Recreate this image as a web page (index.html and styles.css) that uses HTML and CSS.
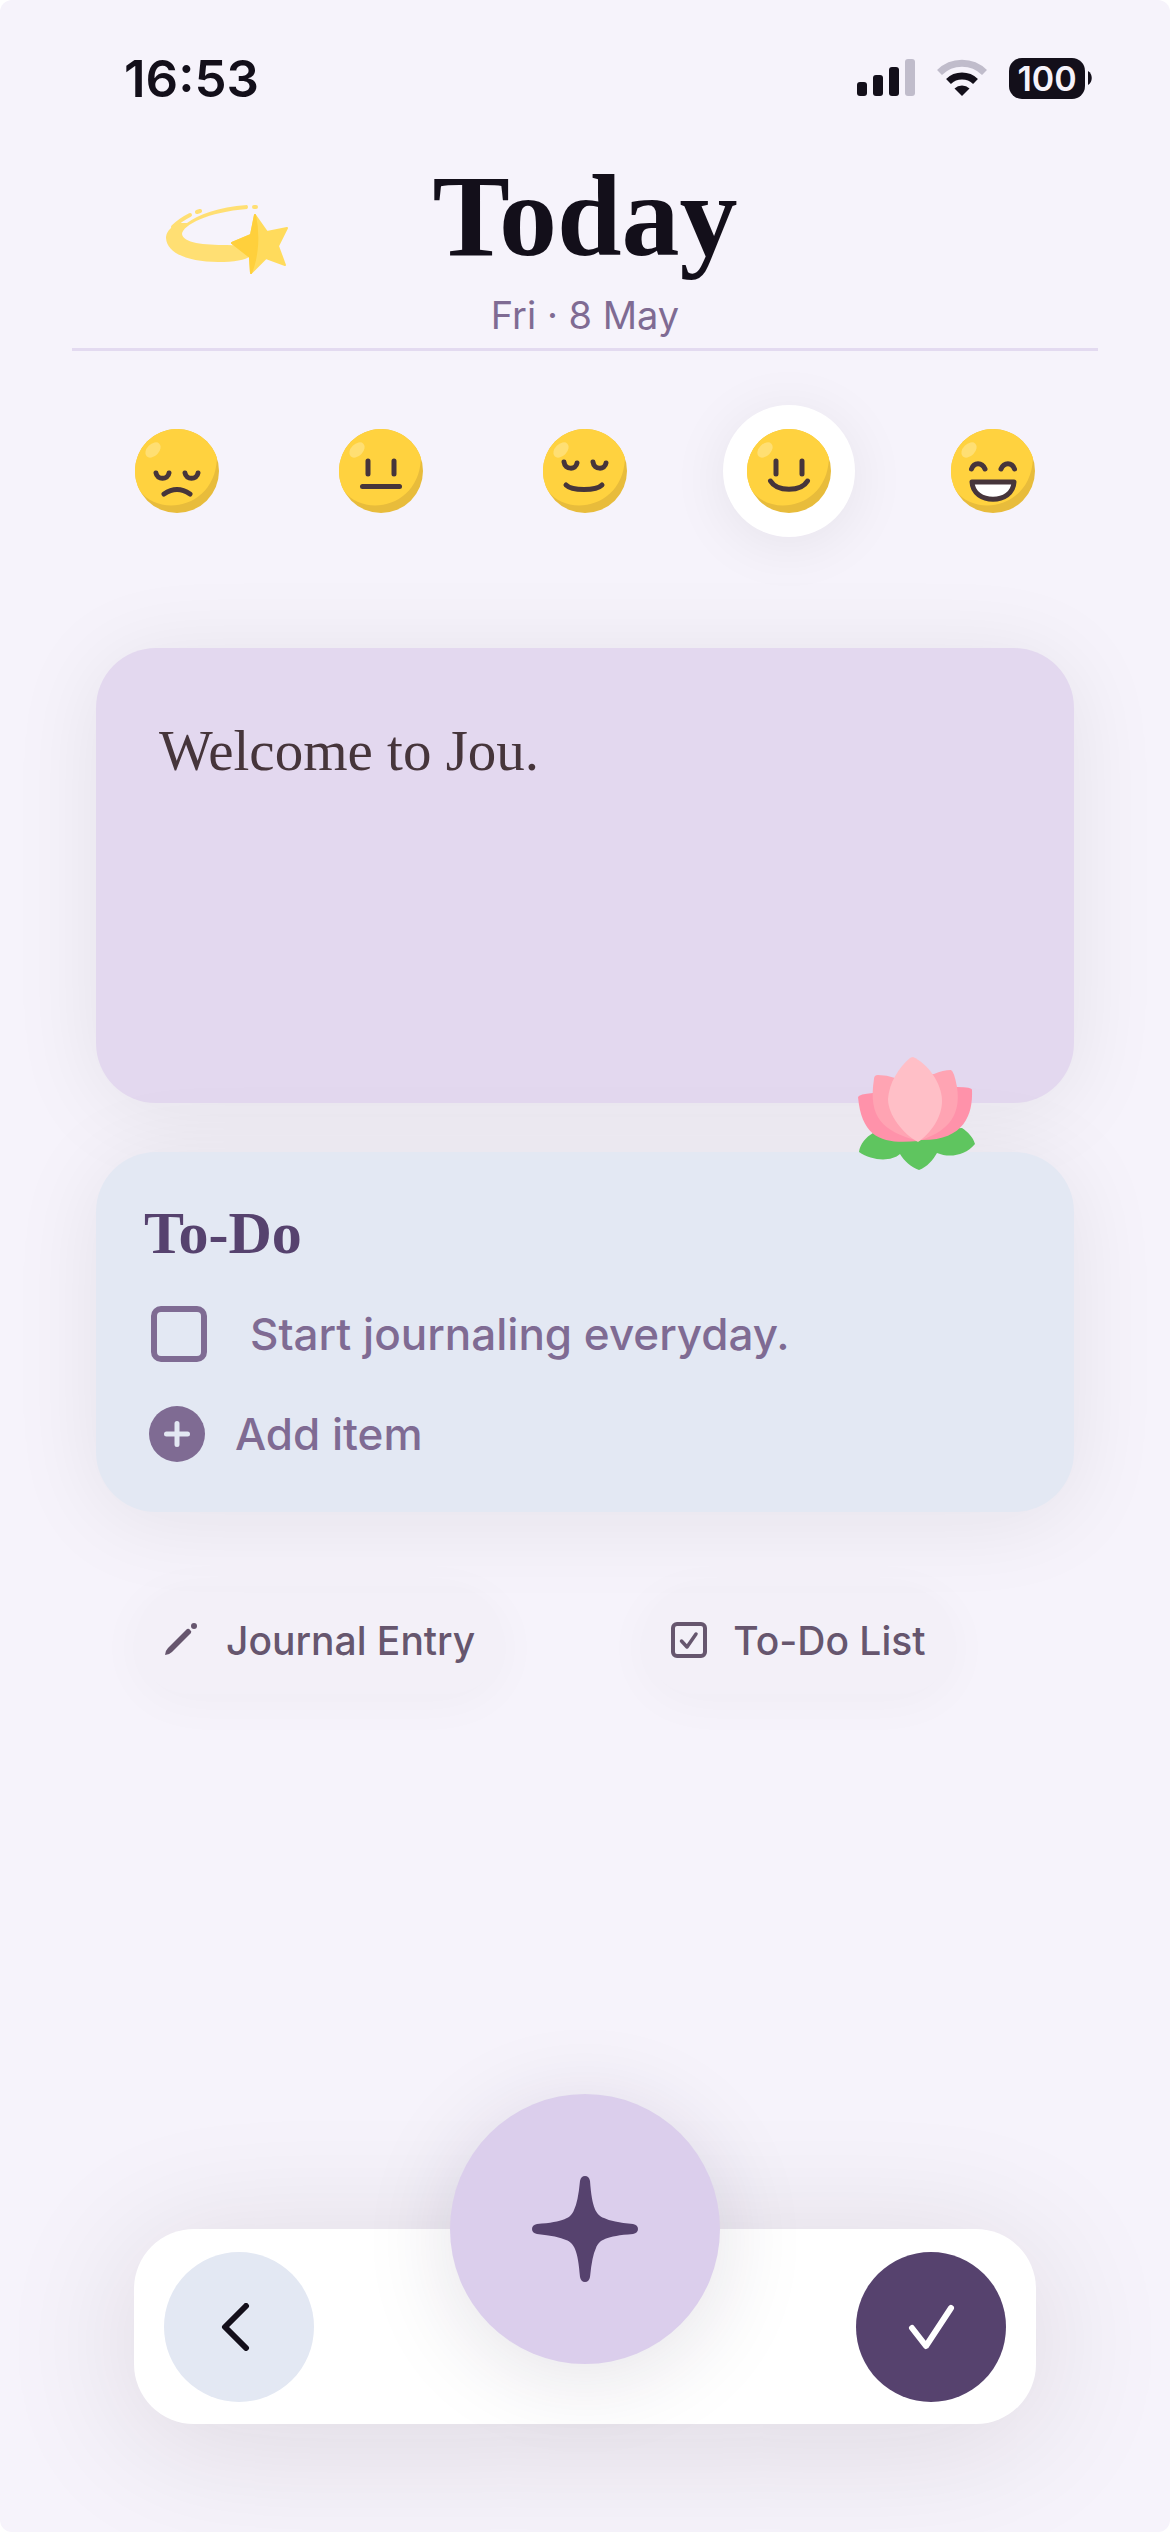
FILE: index.html
```html
<!DOCTYPE html>
<html lang="en">
<head>
    <meta charset="UTF-8">
    <meta name="viewport" content="width=device-width, initial-scale=1.0">
    <title>Jou - Today</title>
    <link rel="stylesheet" href="styles.css">
</head>
<body>
<div class="screen">

    <div class="status-bar">
        <span class="time">16:53</span>
        <div class="status-icons">
            <svg width="58" height="38" viewBox="0 0 58 38">
                <g fill="#130f1a">
                    <rect x="0" y="23" width="10" height="14" rx="3"/>
                    <rect x="16" y="16" width="10" height="21" rx="3"/>
                    <rect x="32" y="8" width="10" height="29" rx="3"/>
                </g>
                <rect x="48" y="0" width="10" height="37" rx="3" fill="#c0bccb"/>
            </svg>
            <svg width="50" height="38" viewBox="0 0 50 38">
                <path d="M2.500 13.500 A32 32 0 0 1 47.500 13.500" fill="none" stroke="#c0bccb" stroke-width="7"/>
                <path d="M11.500 22.500 A19.500 19.500 0 0 1 38.500 22.500" fill="none" stroke="#130f1a" stroke-width="7"/>
                <path d="M25 37 L17.500 29.500 A11 11 0 0 1 32.500 29.500 Z" fill="#130f1a"/>
            </svg>
            <div class="battery">
                <span class="battery-level">100</span>
                <svg width="4" height="14" viewBox="0 0 4 14"><path d="M0 0 C5 3 5 11 0 14 Z" fill="#130f1a"/></svg>
            </div>
        </div>
    </div>

    <header class="header">
        <svg class="shooting-star" width="124" height="72" viewBox="0 0 124 72">
            <path d="M81 1 C52 3 32 11 21 19 L12 19 C3 24 0 29 0 34 C1 50 24 58 52 58 C68 58 80 56 84 52 L84 42 L61 41 C38 41 17 39 16 30 C17 21 42 8 81 5 Q83 3 81 1 Z" fill="#ffdf73"/>
            <path d="M24 11 Q14 16 7 23" fill="none" stroke="#ffdf73" stroke-width="4" stroke-linecap="round"/>
            <path d="M31 8 L34 7 M88 3 L90 3" stroke="#ffdf73" stroke-width="4" stroke-linecap="round"/>
            <path d="M89 11 L101 28 L121 24 L112 42 L119 61 L100 54 L85 69 L84 53 L66 39 L85 31 Z" fill="#ffdb5c" stroke="#ffdb5c" stroke-width="2" stroke-linejoin="round"/>
            <path d="M89 11 C93 30 92 52 85 69 L84 53 L66 39 L85 31 Z" fill="#ffd03c" stroke="#ffd03c" stroke-width="2" stroke-linejoin="round"/>
        </svg>
        <h1>Today</h1>
        <p class="date">Fri · 8 May</p>
    </header>

    <div class="moods">
        <button class="mood" aria-label="Sad">
            <svg width="84" height="84" viewBox="0 0 84 84">
                <circle cx="42" cy="42" r="42" fill="#e8bc3b"/>
                <path d="M42 0 A42 42 0 0 0 5 62 C24 88 80 80 82 29 A42 42 0 0 0 42 0 Z" fill="#ffd23f"/>
                <ellipse cx="18" cy="21" rx="9" ry="6" transform="rotate(-45 18 21)" fill="#ffdf73"/>
                <g fill="none" stroke="#46353b" stroke-width="5" stroke-linecap="round">
                    <path d="M21 44 C22 51 33 51 34 44"/>
                    <path d="M50 44 C51 51 62 51 63 44"/>
                    <path d="M29 65 Q42 56 55 65"/>
                </g>
            </svg>
        </button>
        <button class="mood" aria-label="Neutral">
            <svg width="84" height="84" viewBox="0 0 84 84">
                <circle cx="42" cy="42" r="42" fill="#e8bc3b"/>
                <path d="M42 0 A42 42 0 0 0 5 62 C24 88 80 80 82 29 A42 42 0 0 0 42 0 Z" fill="#ffd23f"/>
                <ellipse cx="18" cy="21" rx="9" ry="6" transform="rotate(-45 18 21)" fill="#ffdf73"/>
                <g fill="none" stroke="#46353b" stroke-width="5" stroke-linecap="round">
                    <path d="M29 32 V45 M55 32 V45"/>
                    <path d="M23.500 57.500 H60.500"/>
                </g>
            </svg>
        </button>
        <button class="mood" aria-label="Calm">
            <svg width="84" height="84" viewBox="0 0 84 84">
                <circle cx="42" cy="42" r="42" fill="#e8bc3b"/>
                <path d="M42 0 A42 42 0 0 0 5 62 C24 88 80 80 82 29 A42 42 0 0 0 42 0 Z" fill="#ffd23f"/>
                <ellipse cx="18" cy="21" rx="9" ry="6" transform="rotate(-45 18 21)" fill="#ffdf73"/>
                <g fill="none" stroke="#46353b" stroke-width="5" stroke-linecap="round">
                    <path d="M21 33 C22 41 33 41 34 34"/>
                    <path d="M50 33 C51 41 62 41 63 34"/>
                    <path d="M23 56 C29 62 53 62 59 56"/>
                </g>
            </svg>
        </button>
        <button class="mood selected" aria-label="Happy" aria-pressed="true">
            <svg width="84" height="84" viewBox="0 0 84 84">
                <circle cx="42" cy="42" r="42" fill="#e8bc3b"/>
                <path d="M42 0 A42 42 0 0 0 5 62 C24 88 80 80 82 29 A42 42 0 0 0 42 0 Z" fill="#ffd23f"/>
                <ellipse cx="18" cy="21" rx="9" ry="6" transform="rotate(-45 18 21)" fill="#ffdf73"/>
                <g fill="none" stroke="#46353b" stroke-width="5" stroke-linecap="round">
                    <path d="M29 32 V45 M55 32 V45"/>
                    <path d="M23.500 52 C30 63 54 63 60.500 52"/>
                </g>
            </svg>
        </button>
        <button class="mood" aria-label="Very happy">
            <svg width="84" height="84" viewBox="0 0 84 84">
                <circle cx="42" cy="42" r="42" fill="#e8bc3b"/>
                <path d="M42 0 A42 42 0 0 0 5 62 C24 88 80 80 82 29 A42 42 0 0 0 42 0 Z" fill="#ffd23f"/>
                <ellipse cx="18" cy="21" rx="9" ry="6" transform="rotate(-45 18 21)" fill="#ffdf73"/>
                <g fill="none" stroke="#46353b" stroke-width="5" stroke-linecap="round" stroke-linejoin="round">
                    <path d="M20.500 40 C23 33 31 33 34 40"/>
                    <path d="M50 40 C53 33 61 33 63.500 40"/>
                    <path d="M21 53 H63 C62 76 22 76 21 53 Z" fill="#fff"/>
                </g>
            </svg>
        </button>
    </div>

    <main class="cards">
        <section class="card journal">
            <p>Welcome to Jou.</p>
        </section>

        <section class="card todo">
            <svg class="lotus" width="118" height="114" viewBox="0 0 118 114">
                <path d="M15 76 C8 80 2 87 1 95 C14 104 33 105 42 97 C46 104 53 110 61 113 C69 110 75 103 79 96 C91 101 107 99 117 87 C115 80 110 75 104 71 Z" fill="#5fc55f"/>
                <path d="M0 40 Q1 37 15 36 L99 30 Q114 30 114 33 C115 58 106 84 62 83 L61 84 C28 87 4 84 0 40 Z" fill="#ff92aa"/>
                <path d="M16 22 Q16 18 20 18 Q29 18 37 21 L76 17 Q85 13 93 13 Q96 14 99 30 C104 62 86 76 60 84 C24 74 10 60 16 22 Z" fill="#ffa4b3"/>
                <path d="M55 0 C69 6 84 26 84 44 C84 60 73 76 60 85 C45 77 30 58 30 42 C31 26 41 10 52 1 Q54 0 55 0 Z" fill="#ffbfc7"/>
            </svg>
            <h2>To-Do</h2>
            <div class="todo-item">
                <input type="checkbox" id="todo1">
                <label for="todo1">Start journaling everyday.</label>
            </div>
            <button class="add-item">
                <svg width="56" height="56" viewBox="0 0 56 56">
                    <circle cx="28" cy="28" r="28" fill="#7f6b93"/>
                    <path d="M28 17.500 V38.500 M17.500 28 H38.500" stroke="#e3e8f3" stroke-width="5" stroke-linecap="round"/>
                </svg>
                Add item
            </button>
        </section>
    </main>

    <div class="actions">
        <button class="action">
            <svg width="36" height="36" viewBox="0 0 36 36">
                <path d="M1 33 Q1 29 4 26 L23 7 Q25 6 26 8 Q28 9 27 11 L8 30 Q5 33 1 33 Z" fill="#66566e"/>
                <circle cx="30" cy="4" r="3" fill="#66566e"/>
            </svg>
            Journal Entry
        </button>
        <button class="action">
            <svg width="36" height="36" viewBox="0 0 36 36">
                <rect x="2" y="2" width="32" height="32" rx="4" fill="none" stroke="#66566e" stroke-width="4"/>
                <path d="M10.500 19 L16 25 L25 12" fill="none" stroke="#66566e" stroke-width="3.500" stroke-linecap="round" stroke-linejoin="round"/>
            </svg>
            To-Do List
        </button>
    </div>

    <nav class="bottom-bar">
        <button class="round back" aria-label="Back">
            <svg width="48" height="48" viewBox="0 0 48 48">
                <path d="M31 3 L10 24 L31 45" fill="none" stroke="#130f1a" stroke-width="6" stroke-linecap="round" stroke-linejoin="round"/>
            </svg>
        </button>
        <button class="sparkle" aria-label="Inspire me">
            <svg width="106" height="106" viewBox="0 0 106 106">
                <path d="M48 5 Q49 0 53 0 Q57 0 58 5 C60 32 64 39 72 42 Q80 46 101 48 Q106 49 106 53 Q106 57 101 58 C74 60 67 64 64 72 Q60 80 58 101 Q57 106 53 106 Q49 106 48 101 C46 74 42 67 34 64 Q26 60 5 58 Q0 57 0 53 Q0 49 5 48 C32 46 39 42 42 34 Q46 26 48 5 Z" fill="#56426e"/>
            </svg>
        </button>
        <button class="round done" aria-label="Done">
            <svg width="48" height="48" viewBox="0 0 48 48">
                <path d="M5 25 L19 43 L44 5" fill="none" stroke="#ffffff" stroke-width="6" stroke-linecap="round" stroke-linejoin="round"/>
            </svg>
        </button>
    </nav>

</div>
</body>
</html>
```
FILE: styles.css
```css
* {
    box-sizing: border-box;
}

body {
    margin: 0;
    background: #ffffff;
    font-family: Inter, sans-serif;
}

h1, h2, p {
    margin: 0;
}

button {
    border: none;
    padding: 0;
    background: none;
    font-family: inherit;
    cursor: pointer;
}

svg {
    display: block;
    flex: none;
}

.screen {
    display: flex;
    flex-direction: column;
    min-height: 100vh;
    background: #f6f3fb;
    border-radius: 12px;
    overflow: hidden;
}

/* status bar */
.status-bar {
    display: flex;
    justify-content: space-between;
    align-items: center;
    height: 156px;
    padding: 0 78px 0 124px;
}

.time {
    font-size: 51px;
    font-weight: 600;
    color: #130f1a;
}

.status-icons {
    display: flex;
    align-items: center;
    gap: 22px;
}

.battery {
    display: flex;
    align-items: center;
    gap: 3px;
}

.battery-level {
    width: 76px;
    border-radius: 13px;
    background: #130f1a;
    color: #f6f3fb;
    font-size: 34px;
    font-weight: 600;
    line-height: 41px;
    text-align: center;
}

/* header */
.header {
    position: relative;
    height: 195px;
    margin: 0 72px;
    border-bottom: 3px solid #e3daf0;
    text-align: center;
}

.header h1 {
    font-family: "Liberation Serif", serif;
    font-size: 116px;
    line-height: 120px;
    color: #130f1a;
}

.date {
    padding-top: 10px;
    font-size: 38px;
    line-height: 58px;
    color: #7f6b93;
}

.shooting-star {
    position: absolute;
    left: 94px;
    top: 48px;
}

/* moods */
.moods {
    display: flex;
    justify-content: space-between;
    margin: 54px 111px 0;
}

.mood {
    display: flex;
    align-items: center;
    justify-content: center;
    width: 132px;
    height: 132px;
    border-radius: 50%;
}

.mood.selected {
    background: #ffffff;
    box-shadow: 0 8px 60px rgba(30, 20, 30, 0.07);
}

/* cards */
.cards {
    display: flex;
    flex-direction: column;
    gap: 49px;
    margin: 111px 96px 0;
}

.card {
    border-radius: 60px;
    box-shadow: 0 8px 90px rgba(30, 20, 20, 0.08);
}

.journal {
    min-height: 455px;
    padding: 70px 63px;
    background: #e3d8ef;
    font-family: "Liberation Serif", serif;
    font-size: 57px;
    line-height: 66px;
    color: #46353b;
}

.todo {
    position: relative;
    padding: 48px 48px 50px;
    background: #e3e8f3;
    color: #7f6b93;
}

.todo h2 {
    font-family: "Liberation Serif", serif;
    font-size: 60px;
    line-height: 66px;
    color: #56426e;
}

.lotus {
    position: absolute;
    right: 98px;
    top: -95px;
}

.todo-item {
    display: flex;
    align-items: center;
    gap: 43px;
    height: 56px;
    margin: 40px 0 44px 7px;
    font-size: 44px;
    font-weight: 500;
}

.todo-item input {
    appearance: none;
    width: 56px;
    height: 56px;
    margin: 0;
    border: 6px solid #7f6b93;
    border-radius: 10px;
}

.add-item {
    display: flex;
    align-items: center;
    gap: 30px;
    margin-left: 5px;
    color: #7f6b93;
    font-size: 44px;
    font-weight: 500;
}

/* actions */
.actions {
    display: flex;
    gap: 140px;
    margin: 74px 136px 0;
}

.action {
    display: flex;
    align-items: center;
    gap: 26px;
    height: 108px;
    padding: 0 28px;
    border-radius: 54px;
    background: #f3f0f8;
    box-shadow: 0 8px 50px rgba(30, 20, 40, 0.03);
    color: #66566e;
    font-size: 39px;
    font-weight: 500;
}

/* bottom bar */
.bottom-bar {
    position: relative;
    display: flex;
    justify-content: space-between;
    align-items: center;
    height: 195px;
    margin: auto 134px 108px;
    padding: 0 30px;
    border-radius: 60px;
    background: #ffffff;
    box-shadow: 0 16px 140px rgba(30, 20, 20, 0.12);
}

.round {
    display: flex;
    align-items: center;
    justify-content: center;
    width: 150px;
    height: 150px;
    border-radius: 50%;
}

.back {
    background: #e3e8f3;
}

.done {
    background: #56426e;
}

.sparkle {
    position: absolute;
    left: calc(50% - 135px);
    top: -135px;
    display: flex;
    align-items: center;
    justify-content: center;
    width: 270px;
    height: 270px;
    border-radius: 50%;
    background: #dbceec;
    box-shadow: 0 12px 90px rgba(40, 20, 60, 0.13);
}
```
